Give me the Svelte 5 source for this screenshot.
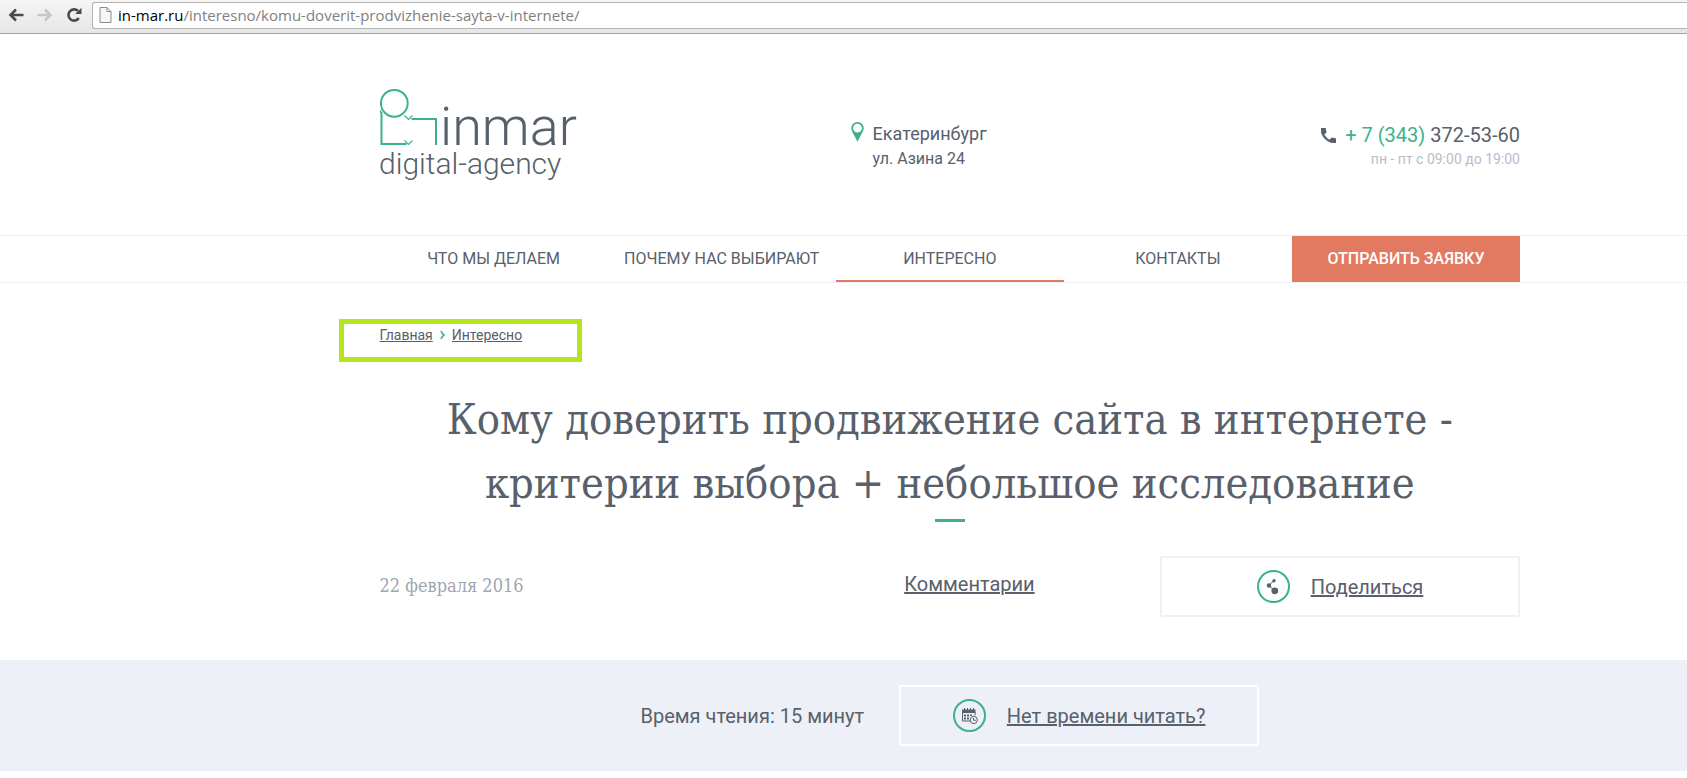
<script>
	let address = $state('/interesno/komu-doverit-prodvizhenie-sayta-v-internete/');

	const menu = [
		{ title: 'Что мы делаем', href: '#services' },
		{ title: 'Почему нас выбирают', href: '#why' },
		{ title: 'Интересно', href: '#interesno', active: true },
		{ title: 'Контакты', href: '#contacts' }
	];
</script>

<svelte:head>
	<title>Кому доверить продвижение сайта в интернете</title>
</svelte:head>

<div class="browser">
	<button type="button" aria-label="Назад">
		<svg width="16" height="14" viewBox="0 0 16 14" fill="none" stroke="#4a4a4a" stroke-width="2.6">
			<path d="M8 1.5 2.5 7 8 12.500M2.500 7H15.500" />
		</svg>
	</button>
	<button type="button" aria-label="Вперёд">
		<svg width="16" height="14" viewBox="0 0 16 14" fill="none" stroke="#c6c6c6" stroke-width="2.6">
			<path d="M8 1.5 13.500 7 8 12.500M13.500 7H.5" />
		</svg>
	</button>
	<button type="button" aria-label="Обновить">
		<svg width="16" height="16" viewBox="0 0 16 16">
			<path d="M12.800 11A5.600 5.600 0 1 1 12 4" fill="none" stroke="#4a4a4a" stroke-width="2.6" />
			<path d="M15.500 .8V7H9.200Z" fill="#4a4a4a" />
		</svg>
	</button>
	<div class="address">
		<svg width="13" height="16" viewBox="0 0 13 16" fill="#f6f6f6" stroke="#8c8c8c">
			<path d="M1 .5H8L12 4.500V15.500H1ZM8 .5V4.500H12" />
		</svg>
		<span class="host">in-mar.ru</span>
		<input type="text" aria-label="Адрес страницы" bind:value={address} />
	</div>
</div>

<header class="wrap header">
	<a class="logo" href="#home" aria-label="inmar digital-agency">
		<svg width="210" height="100" viewBox="1 0 210 100">
			<g fill="none" stroke="#3bb28c" stroke-width="2">
				<circle cx="15.300" cy="15.300" r="13.400" />
				<path d="M.8 22.500 2.500 25V56H27.500" />
				<path d="M32.500 31H57V57" />
				<path d="M25.500 27.500 29.500 31.500 33.500 27.500M25.500 52.500 29.500 56.500 33.500 52.500" stroke-width="1.2" />
			</g>
			<text class="logo-name" x="61" y="57">inmar</text>
			<text class="logo-sub" x="0" y="86">digital-agency</text>
		</svg>
	</a>
	<address class="place">
		<svg width="13" height="20" viewBox="0 0 13 20">
			<path fill="#3bb28c" fill-rule="evenodd" d="M6.500 0A6.200 6.200 0 0 1 12.700 6.200C12.700 9 10 12 6.500 20 3 12 .3 9 .3 6.200A6.200 6.200 0 0 1 6.500 0ZM6.500 1.800A4.400 4.400 0 1 0 6.500 10.600 4.400 4.400 0 1 0 6.500 1.800Z" />
		</svg>
		<div>
			<div class="city">Екатеринбург</div>
			<div class="street">ул. Азина 24</div>
		</div>
	</address>
	<div class="phone">
		<a href="tel:+73433725360">
			<svg width="15" height="15" viewBox="0 0 18 18" fill="#56606b">
				<path stroke="#56606b" d="M3.620 7.790c1.440 2.830 3.760 5.140 6.590 6.590l2.200-2.200c.27-.27.670-.36 1.020-.24 1.120.37 2.330.57 3.570.57.550 0 1 .45 1 1V17c0 .55-.45 1-1 1C7.610 18 0 10.390 0 1c0-.55.450-1 1-1h3.500c.550 0 1 .45 1 1 0 1.250.2 2.450.57 3.570.110.350.030.740-.250 1.020l-2.200 2.200z" />
			</svg>
			<span><span class="code">+ 7 (343)</span> 372-53-60</span>
		</a>
		<div class="hours">пн - пт с 09:00 до 19:00</div>
	</div>
</header>

<nav class="menu">
	<div class="wrap menu-row">
		{#each menu as item}
			<a href={item.href} class:active={item.active}>{item.title}</a>
		{/each}
		<button type="button" class="order">Отправить заявку</button>
	</div>
</nav>

<main>
	<div class="wrap">
		<nav class="crumbs" aria-label="Хлебные крошки">
			<a href="#home">Главная</a>
			<svg width="5" height="10" viewBox="0 0 5 10" fill="none" stroke="#3bb28c" stroke-width="1.6">
				<path d="M1 1Q2 3.500 4 5 2 6.500 1 9" />
			</svg>
			<a href="#interesno">Интересно</a>
		</nav>

		<h1>Кому доверить продвижение сайта в интернете - критерии выбора + небольшое исследование</h1>

		<div class="meta">
			<time datetime="2016-02-22">22 февраля 2016</time>
			<a class="comments" href="#comments">Комментарии</a>
			<a class="box" href="#share">
				<svg width="33" height="33" viewBox="0 0 33 33">
					<circle cx="16.500" cy="16.500" r="15.500" fill="none" stroke="#3bb28c" stroke-width="2" />
					<g fill="#56606b">
						<path d="M12 15.500 17 10.500M12 15.500 18 21" stroke="#56606b" />
						<circle cx="17" cy="10.700" r="1.700" />
						<circle cx="12" cy="15.500" r="2.200" />
						<circle cx="17.800" cy="20.800" r="3.400" />
					</g>
				</svg>
				<span>Поделиться</span>
			</a>
		</div>
	</div>

	<section class="reading">
		<div class="wrap reading-row">
			<p>Время чтения: 15 минут</p>
			<a class="box white" href="#later">
				<svg width="33" height="33" viewBox="0 0 33 33">
					<circle cx="16.500" cy="16.500" r="15.500" fill="none" stroke="#3bb28c" stroke-width="2" />
					<g fill="#56606b">
						<path d="M9 10.500H22.500V14H9Z" />
						<path d="M11.500 9V11.500M14.500 9V11.500M17.500 9V11.500M20.500 9V11.500" stroke="#56606b" />
						<path d="M17 22H9.500V14M22 13V16.500" fill="none" stroke="#56606b" />
						<path d="M11 15.500h2v2h-2zM14 15.500h2v2h-2zM17 15.500h2v1.500h-2zM11 18.500h2v2h-2zM14 18.500h2v2h-2z" />
					</g>
					<circle cx="20.800" cy="21" r="3.600" fill="#edf0f7" stroke="#56606b" />
					<path d="M20.500 18.800V21.300H22.800" fill="none" stroke="#56606b" />
				</svg>
				<span>Нет времени читать?</span>
			</a>
		</div>
	</section>
</main>

<style>
	:global(body) {
		background: #fff;
		color: #58606b;
		font-family: Roboto, sans-serif;
		font-size: 16px;
	}

	a {
		color: inherit;
	}

	button {
		border: none;
		padding: 0;
		background: none;
		font: inherit;
		cursor: pointer;
	}

	svg {
		display: block;
		flex: none;
	}

	.wrap {
		padding: 0 9.9% 0 22.5%;
	}

	/* browser bar */
	.browser {
		display: flex;
		align-items: center;
		gap: 13px;
		box-sizing: border-box;
		height: 34px;
		padding: 0 0 3px 8px;
		border-bottom: 1px solid #a5a5a5;
		background: linear-gradient(#f5f5f5, #e6e6e6);
	}

	.address {
		flex: 1;
		display: flex;
		align-items: center;
		box-sizing: border-box;
		height: 27px;
		margin-left: -3px;
		padding-left: 6px;
		border: 1px solid #b4b4b4;
		border-right: none;
		border-radius: 3px 0 0 3px;
		background: #fff;
		font: 15px 'Open Sans', sans-serif;
	}

	.host {
		margin-left: 6px;
		color: #000;
	}

	.address input {
		flex: 1;
		border: none;
		padding: 0;
		outline: none;
		background: none;
		color: #808080;
		font: inherit;
	}

	/* header */
	.header {
		display: grid;
		grid-template-columns: 41.3% 1fr 1fr;
		padding-top: 54px;
		padding-bottom: 47px;
	}

	.logo-name,
	.logo-sub {
		fill: #56606b;
		font-weight: 300;
	}

	.logo-name {
		font-size: 54px;
	}

	.logo-sub {
		font-size: 30px;
	}

	.place {
		display: flex;
		gap: 9px;
		padding-top: 34px;
		font-style: normal;
	}

	.city {
		font-size: 18px;
		line-height: 24px;
	}

	.street {
		font-size: 16px;
		line-height: 26px;
	}

	.phone {
		padding-top: 34px;
		text-align: right;
	}

	.phone a {
		display: flex;
		align-items: center;
		justify-content: flex-end;
		gap: 9px;
		font-size: 20px;
		line-height: 26px;
		text-decoration: none;
	}

	.code {
		color: #3bb28c;
	}

	.hours {
		color: #b9bcc9;
		font-size: 14px;
		line-height: 22px;
	}

	/* menu */
	.menu {
		border-top: 1px solid #edf0f7;
		border-bottom: 1px solid #edf0f7;
	}

	.menu-row {
		display: grid;
		grid-template-columns: repeat(5, 1fr);
		line-height: 42px;
		text-align: center;
		text-transform: uppercase;
	}

	.menu-row a {
		padding-top: 2px;
		border-bottom: 2px solid transparent;
		text-decoration: none;
	}

	.menu-row a.active {
		border-color: #e27a62;
	}

	.order {
		background: #e27a62;
		color: #fff;
		font-weight: 500;
		text-transform: uppercase;
	}

	/* article */
	.crumbs {
		display: flex;
		align-items: flex-start;
		gap: 7px;
		box-sizing: border-box;
		width: 243px;
		height: 43px;
		margin: 36px 0 0 -41px;
		padding: 3px 0 0 36px;
		border: 5px solid #b4e61d;
		font-size: 14px;
		line-height: 16px;
	}

	.crumbs svg {
		margin-top: 3px;
	}

	h1 {
		margin: 25px 0 0;
		font: 400 43px/64px 'Roboto Slab', 'DejaVu Serif Condensed', 'DejaVu Serif', serif;
		text-align: center;
	}

	h1::after {
		content: '';
		display: block;
		width: 30px;
		height: 3px;
		margin: 4px auto 0;
		background: #3bb28c;
	}

	.meta {
		display: grid;
		grid-template-columns: 46% 1fr 360px;
		align-items: center;
		margin: 34px 0 43px;
	}

	time {
		padding-bottom: 3px;
		color: #a0a5b0;
		font: 18px 'Roboto Slab', 'DejaVu Serif Condensed', 'DejaVu Serif', serif;
	}

	.comments,
	.box,
	.reading {
		font-size: 20px;
		line-height: 24px;
	}

	.comments {
		padding-bottom: 6px;
	}

	.box {
		display: flex;
		align-items: center;
		justify-content: center;
		gap: 21px;
		box-sizing: border-box;
		width: 360px;
		height: 61px;
		border: 2px solid #edf0f7;
		border-radius: 2px;
	}

	.box.white {
		border-color: #fff;
	}

	.reading {
		padding: 25px 0;
		background: #edf0f7;
	}

	.reading-row {
		display: flex;
		align-items: center;
		justify-content: center;
		gap: 35px;
	}

	.reading p {
		margin: 0;
	}
</style>
